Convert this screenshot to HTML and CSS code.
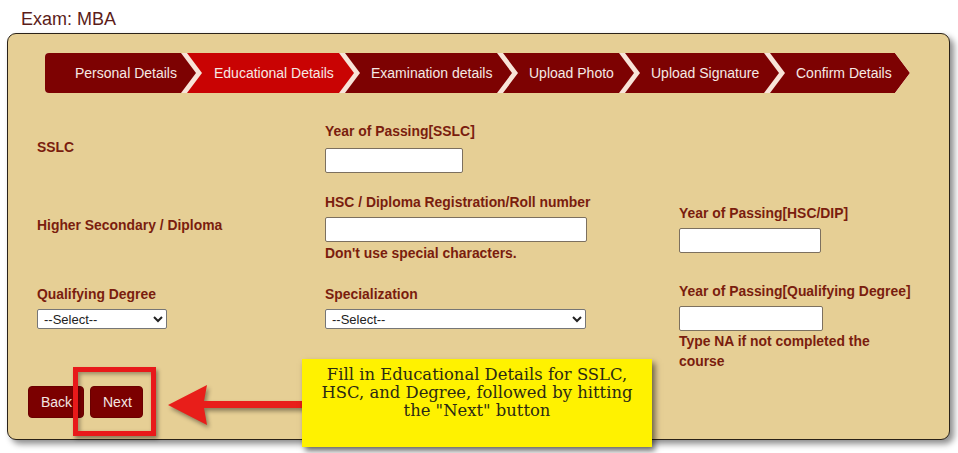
FILE: index.html
```html
<!DOCTYPE html>
<html lang="en">
<head>
<meta charset="utf-8">
<title>Exam: MBA</title>
<link rel="stylesheet" href="styles.css">
</head>
<body>
<div class="page-title">Exam: MBA</div>
<div class="card">
  <div class="steps">
    <div class="step step-first" style="width:151px">Personal Details</div>
    <div class="step step-active" style="width:167px">Educational Details</div>
    <div class="step" style="width:167px">Examination details</div>
    <div class="step" style="width:131px">Upload Photo</div>
    <div class="step" style="width:154px">Upload Signature</div>
    <div class="step" style="width:140px">Confirm Details</div>
  </div>

  <div class="row row-1">
    <div class="cell cell-center"><span class="label">SSLC</span></div>
    <div class="cell">
      <div class="label">Year of Passing[SSLC]</div>
      <input class="field field-gap7" type="text" style="width:138px">
    </div>
    <div class="cell"></div>
  </div>

  <div class="row row-2">
    <div class="cell cell-center cell-up"><span class="label">Higher Secondary / Diploma</span></div>
    <div class="cell">
      <div class="label">HSC / Diploma Registration/Roll number</div>
      <input class="field field-gap5" type="text" style="width:262px">
      <div class="label hint-1">Don't use special characters.</div>
    </div>
    <div class="cell cell-center">
      <div class="label">Year of Passing[HSC/DIP]</div>
      <input class="field field-gap5" type="text" style="width:142px">
    </div>
  </div>

  <div class="row row-3">
    <div class="cell cell-down">
      <div class="label">Qualifying Degree</div>
      <select class="select" style="width:130px"><option>--Select--</option></select>
    </div>
    <div class="cell cell-down">
      <div class="label">Specialization</div>
      <select class="select" style="width:261px"><option>--Select--</option></select>
    </div>
    <div class="cell">
      <div class="label">Year of Passing[Qualifying Degree]</div>
      <input class="field field-gap5" type="text" style="width:144px">
      <div class="label hint-wrap">Type NA if not completed the course</div>
    </div>
  </div>

  <div class="actions">
    <button class="btn" type="button">Back</button>
    <button class="btn" type="button">Next</button>
  </div>

  <div class="highlight-box"></div>
  <svg class="pointer-arrow" width="140" height="46" viewBox="0 0 140 46" aria-hidden="true">
    <polygon points="3,22 42,2 39,18 140,18 140,25 39,25 42,42" fill="#e81e1a"/>
  </svg>
  <div class="callout">Fill in Educational Details for SSLC,<br>HSC, and Degree, followed by hitting<br>the "Next" button</div>
</div>
</body>
</html>
```

FILE: styles.css
```css
html, body {
  margin: 0;
  padding: 0;
  background: #ffffff;
}

body {
  font-family: "Liberation Sans", Arial, sans-serif;
  width: 958px;
  height: 453px;
  overflow: hidden;
}

.page-title {
  height: 25px;
  padding: 8px 0 0 21px;
  font-size: 18px;
  line-height: 22px;
  color: #5b1d1a;
}

.card {
  position: relative;
  box-sizing: border-box;
  height: 407px;
  margin: 0 8px 0 7px;
  background: #e6cf95;
  border: 1px solid #2a2218;
  border-radius: 9px;
  box-shadow: 4px 4px 6px rgba(0, 0, 0, 0.45);
}

/* step bar */
.steps {
  display: flex;
  width: max-content;
  height: 40px;
  margin: 19px 0 0 37px;
  background: #f8e4d8;
  border-radius: 4px 0 0 4px;
  clip-path: polygon(0 0, calc(100% - 15px) 0, 100% 50%, calc(100% - 15px) 100%, 0 100%);
}

.step {
  box-sizing: border-box;
  flex: none;
  height: 40px;
  margin-left: -9px;
  padding-left: 26px;
  font-size: 14px;
  line-height: 41px;
  color: #f6e9e4;
  white-space: nowrap;
  background: #7d0202;
  clip-path: polygon(0 0, calc(100% - 15px) 0, 100% 50%, calc(100% - 15px) 100%, 0 100%, 15px 50%);
}

.step-first {
  margin-left: 0;
  padding-left: 30px;
  border-radius: 4px 0 0 4px;
  clip-path: polygon(0 0, calc(100% - 15px) 0, 100% 50%, calc(100% - 15px) 100%, 0 100%);
}

.step-active {
  padding-left: 27px;
  background: #c90303;
}

/* form rows */
.row {
  display: grid;
  grid-template-columns: 288px 354px 1fr;
  padding-left: 29px;
}

.row-1 { margin-top: 28px; }
.row-2 { margin-top: 19px; }
.row-3 { margin-top: 18px; }

.cell {
  display: flex;
  flex-direction: column;
  align-items: flex-start;
}

.cell-center { align-self: center; }
.cell-up { margin-top: -5px; }
.cell-down { margin-top: 3px; }

.label {
  font-size: 13.9px;
  font-weight: bold;
  line-height: 20px;
  color: #7a1d0e;
  white-space: nowrap;
}

.hint-1 { margin-top: 1px; }

.hint-wrap {
  width: 200px;
  white-space: normal;
}

.field {
  box-sizing: border-box;
  height: 25px;
  margin: 0;
  padding: 2px 4px;
  border: 1px solid #7c705f;
  border-radius: 2px;
  background: #ffffff;
  font-family: "Liberation Sans", Arial, sans-serif;
  font-size: 13px;
}

.field-gap7 { margin-top: 7px; }
.field-gap5 { margin-top: 5px; }

.select {
  box-sizing: border-box;
  height: 20px;
  margin: 5px 0 0 0;
  padding: 0 0 0 2px;
  border: 1px solid #767676;
  border-radius: 2px;
  background: #ffffff;
  color: #222222;
  font-family: "Liberation Sans", Arial, sans-serif;
  font-size: 13px;
}

/* buttons */
.actions {
  display: flex;
  gap: 6px;
  margin: 15px 0 0 20px;
}

.btn {
  box-sizing: border-box;
  height: 32px;
  margin: 0;
  padding: 0 12px;
  border: 1px solid #6a0000;
  border-radius: 4px;
  background: #7b0000;
  color: #f4e6e2;
  font-family: "Liberation Sans", Arial, sans-serif;
  font-size: 14px;
}

.btn + .btn { width: 53px; }
.btn:first-child { width: 56px; }

/* annotation overlays */
.highlight-box {
  position: absolute;
  left: 65px;
  top: 333px;
  box-sizing: border-box;
  width: 83px;
  height: 69px;
  border: 5px solid #e8191a;
  box-shadow: 2px 3px 4px rgba(0, 0, 0, 0.4), inset 2px 2px 4px rgba(0, 0, 0, 0.35);
}

.pointer-arrow {
  position: absolute;
  left: 157px;
  top: 349px;
  filter: drop-shadow(2px 3px 2px rgba(0, 0, 0, 0.4));
}

.callout {
  position: absolute;
  left: 294px;
  top: 325px;
  box-sizing: border-box;
  width: 350px;
  height: 88px;
  padding: 7px 0 0;
  background: #fff200;
  box-shadow: 3px 4px 6px rgba(0, 0, 0, 0.55);
  font-family: "DejaVu Serif", "Liberation Serif", serif;
  font-size: 16.4px;
  line-height: 18px;
  color: #2b2a14;
  text-align: center;
  white-space: nowrap;
}
```
